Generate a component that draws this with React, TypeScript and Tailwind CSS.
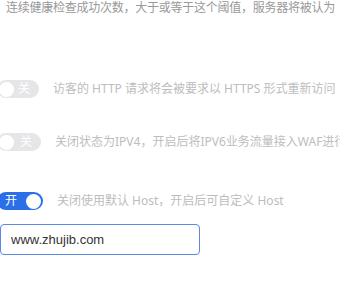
import React from "react";

type SwitchProps = {
  on: boolean;
  width: string;
};

function Switch({ on, width }: SwitchProps) {
  return (
    <div
      className={`-ml-[3px] h-[18px] ${width} shrink-0 rounded-full flex items-center justify-between px-[2px] ${
        on ? "bg-[#2a6ee8]" : "bg-[#e6e6e9]"
      }`}
    >
      {on ? (
        <>
          <span className="pl-[6px] text-[12px] leading-none text-white">开</span>
          <span className="h-[15px] w-[15px] rounded-full bg-white"></span>
        </>
      ) : (
        <>
          <span className="h-[15px] w-[15px] rounded-full bg-white"></span>
          <span className="pr-[7px] text-[12px] leading-none text-white">关</span>
        </>
      )}
    </div>
  );
}

function App() {
  const [host, setHost] = React.useState<string>("www.zhujib.com");

  return (
    <div
      className="w-[340px] h-[286px] bg-white overflow-hidden flex flex-col"
      style={{ fontFamily: '"Noto Sans", "Noto Sans CJK SC", sans-serif' }}
    >
      <p className="pl-[6px] text-[12px] leading-[15px] tracking-[-0.25px] text-[#999999] whitespace-nowrap">
        连续健康检查成功次数，大于或等于这个阈值，服务器将被认为
      </p>

      <div className="mt-[65px] flex items-center gap-[14px] whitespace-nowrap">
        <Switch on={false} width="w-[42px]" />
        <span className="text-[12px] leading-none text-[#bdbdbd]">访客的 HTTP 请求将会被要求以 HTTPS 形式重新访问</span>
      </div>

      <div className="mt-[35px] flex items-center gap-[14px] whitespace-nowrap">
        <Switch on={false} width="w-[44px]" />
        <span className="text-[12px] leading-none text-[#bdbdbd]">关闭状态为IPV4，开启后将IPV6业务流量接入WAF进行</span>
      </div>

      <div className="mt-[41px] flex items-center gap-[14px] whitespace-nowrap">
        <Switch on={true} width="w-[46px]" />
        <span className="text-[12px] leading-none text-[#bdbdbd]">关闭使用默认 Host，开启后可自定义 Host</span>
      </div>

      <div className="mt-[14px]">
        <input
          className="h-[31px] w-[200px] rounded-[4px] border border-[#5a8ae6] px-[10px] text-[13px] text-[#333] outline-none"
          style={{ fontFamily: '"Liberation Sans", Arial, sans-serif' }}
          value={host}
          onChange={(e) => setHost(e.target.value)}
          autoFocus
        />
      </div>
    </div>
  );
}

export default App;
